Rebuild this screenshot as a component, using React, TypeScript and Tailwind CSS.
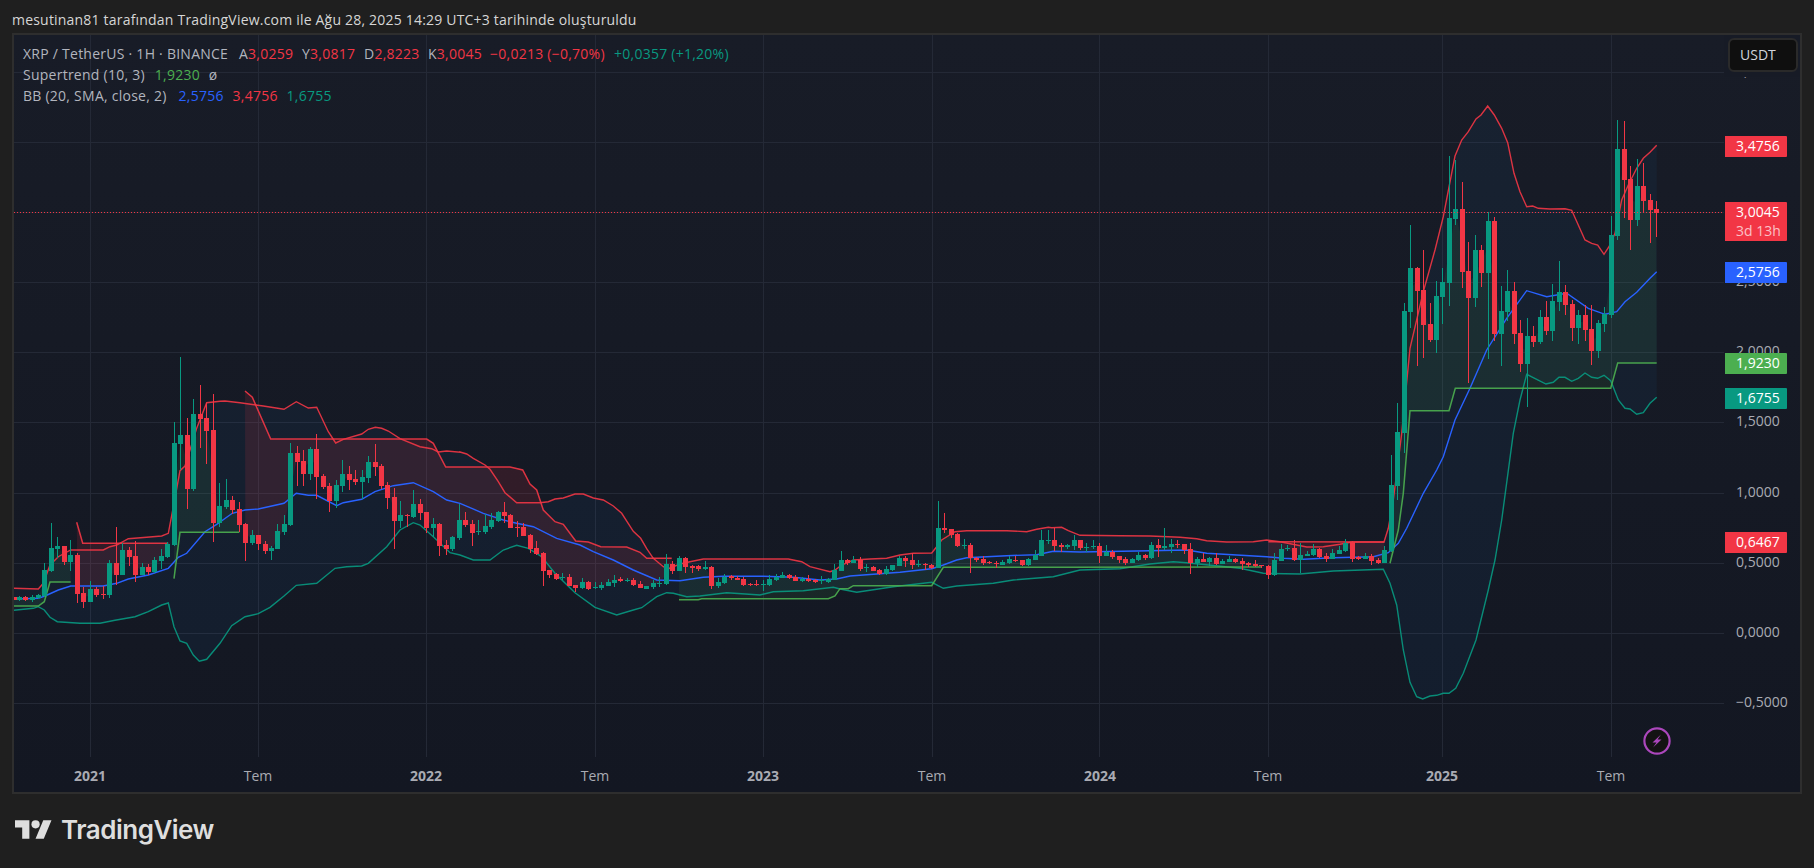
const UP = 1
const DN = 0
type Pt = number[]

// the series below were read off 3x crops, at() brings them back to page pixels
const at = (ox: number, oy: number, pts: Pt[]): Pt[] => pts.map(([x, y]) => [ox + x / 3, oy + y / 3])
const bars = (ox: number, oy: number, rows: number[][]) =>
  rows.map(([x, hi, top, bot, lo, dir]) => ({
    x: ox + x / 3,
    hi: oy + hi / 3,
    top: oy + top / 3,
    bot: oy + bot / 3,
    lo: oy + lo / 3,
    dir,
  }))

const candles = [
  ...bars(0, 340, [
    [42, 770, 771, 780, 781, DN], [58, 768, 771, 780, 782, UP], [76, 769, 771, 780, 783, DN], [97, 765, 772, 781, 785, UP],
    [115, 763, 766, 775, 776, UP], [133, 670, 690, 768, 772, UP], [154, 549, 625, 693, 697, UP], [172, 591, 618, 627, 655, UP],
    [193, 617, 618, 667, 675, DN], [211, 600, 645, 667, 692, UP], [232, 640, 645, 762, 790, DN], [250, 740, 758, 786, 803, DN],
    [271, 723, 747, 786, 786, UP], [289, 740, 746, 766, 770, DN], [310, 738, 763, 765, 777, DN], [328, 660, 669, 765, 775, UP],
    [349, 561, 669, 705, 735, DN], [367, 610, 630, 705, 705, UP], [388, 620, 630, 651, 678, DN], [406, 603, 648, 706, 725, DN],
    [427, 670, 680, 706, 706, UP], [445, 672, 682, 697, 705, DN], [463, 650, 660, 697, 700, UP], [484, 627, 648, 663, 687, UP],
    [502, 605, 612, 652, 655, UP], [523, 246, 309, 615, 618, UP], [541, 52, 285, 312, 390, UP], [562, 235, 285, 447, 507, DN],
    [580, 178, 222, 447, 453, UP], [601, 135, 222, 237, 323, DN], [619, 190, 234, 273, 372, DN], [640, 163, 270, 550, 606, DN],
    [658, 430, 498, 550, 560, UP], [679, 417, 481, 502, 507, UP], [697, 468, 481, 510, 522, DN], [718, 487, 508, 555, 575, DN],
    [736, 550, 552, 609, 663, DN], [757, 570, 585, 610, 615, UP], [775, 585, 585, 612, 630, DN], [796, 603, 612, 633, 642, DN],
    [814, 618, 624, 633, 660, UP], [832, 553, 573, 627, 627, UP], [853, 525, 552, 576, 585, UP], [871, 309, 339, 555, 558, UP],
    [892, 318, 339, 366, 438, DN], [910, 330, 363, 402, 438, DN], [931, 322, 327, 402, 420, UP], [949, 282, 327, 411, 477, DN],
    [970, 402, 408, 441, 447, DN], [988, 430, 438, 483, 516, DN], [1009, 420, 435, 483, 504, UP], [1027, 360, 402, 438, 456, UP],
    [1048, 378, 402, 420, 450, DN], [1066, 390, 417, 426, 435, DN], [1087, 390, 411, 426, 478, UP], [1105, 348, 366, 414, 429, UP],
    [1126, 312, 366, 381, 408, DN], [1144, 372, 378, 438, 447, DN], [1162, 427, 435, 474, 507, DN], [1183, 444, 471, 543, 627, DN],
    [1201, 483, 525, 543, 565, UP], [1222, 522, 525, 527, 560, DN], [1240, 450, 492, 531, 533, UP], [1261, 477, 492, 519, 540, DN],
    [1279, 516, 516, 564, 579, DN], [1300, 534, 552, 564, 590, UP], [1318, 550, 552, 618, 648, DN], [1339, 600, 615, 627, 645, DN],
    [1357, 588, 591, 627, 633, UP],
  ]),
  ...bars(220, 340, [
    [718, 492, 540, 595, 600, UP], [736, 516, 540, 555, 561, DN], [757, 540, 552, 579, 618, DN], [775, 540, 572, 576, 585, UP],
    [796, 522, 558, 576, 582, UP], [814, 520, 540, 561, 567, UP], [835, 513, 516, 543, 546, UP], [853, 486, 516, 528, 549, DN],
    [871, 522, 525, 564, 564, DN], [892, 543, 561, 564, 591, DN], [910, 549, 561, 588, 588, DN], [931, 582, 585, 627, 639, DN],
    [949, 603, 624, 642, 645, DN], [970, 636, 639, 693, 738, DN], [988, 690, 690, 705, 714, DN], [1009, 699, 702, 717, 720, DN],
    [1027, 699, 711, 714, 720, UP], [1048, 702, 711, 738, 738, DN], [1066, 735, 735, 744, 756, DN], [1087, 714, 726, 744, 747, UP],
    [1105, 723, 726, 747, 750, DN], [1126, 726, 741, 744, 747, UP], [1144, 726, 735, 744, 750, UP], [1165, 717, 726, 738, 738, UP],
    [1183, 705, 720, 729, 741, UP], [1201, 711, 717, 723, 726, DN], [1222, 714, 719, 722, 726, UP], [1240, 714, 720, 735, 738, DN],
    [1261, 723, 732, 744, 745, DN], [1279, 738, 738, 747, 747, UP], [1300, 720, 729, 741, 747, UP], [1318, 711, 728, 732, 741, UP],
    [1339, 642, 672, 732, 735, UP], [1357, 663, 672, 693, 702, DN],
  ]),
  ...bars(660, 490, [
    [58, 198, 204, 243, 243, UP], [76, 200, 204, 231, 248, DN], [97, 225, 228, 234, 248, DN], [115, 225, 229, 237, 243, DN],
    [136, 213, 231, 237, 240, UP], [154, 228, 232, 288, 297, DN], [175, 264, 276, 288, 294, UP], [193, 252, 261, 279, 282, UP],
    [214, 255, 259, 264, 270, DN], [232, 259, 264, 270, 270, DN], [250, 261, 267, 285, 288, DN], [271, 279, 282, 285, 288, DN],
    [289, 270, 282, 286, 288, DN], [310, 270, 283, 285, 303, UP], [328, 255, 267, 285, 288, UP], [349, 252, 261, 270, 273, UP],
    [367, 246, 255, 264, 264, UP], [388, 252, 255, 264, 267, DN], [406, 255, 261, 273, 273, DN], [427, 261, 267, 273, 276, UP],
    [445, 255, 267, 273, 276, DN], [466, 267, 270, 276, 279, DN], [484, 258, 270, 273, 282, UP], [505, 264, 267, 276, 279, UP],
    [523, 222, 240, 270, 270, UP], [544, 183, 210, 243, 243, UP], [562, 207, 210, 219, 225, DN], [580, 198, 210, 219, 219, UP],
    [601, 201, 210, 237, 243, DN], [619, 222, 230, 233, 246, UP], [640, 228, 231, 243, 243, DN], [658, 237, 240, 252, 255, DN],
    [679, 228, 237, 252, 255, UP], [697, 225, 225, 240, 243, UP], [718, 198, 204, 228, 228, UP], [736, 198, 204, 213, 231, DN],
    [757, 189, 210, 225, 237, DN], [775, 210, 222, 225, 231, UP], [796, 219, 222, 225, 240, DN], [814, 222, 225, 234, 237, DN],
    [835, 33, 114, 234, 234, UP], [853, 69, 114, 120, 129, DN], [874, 117, 117, 135, 144, DN], [892, 129, 132, 168, 171, DN],
    [913, 147, 165, 168, 177, UP], [931, 159, 165, 204, 249, DN], [949, 201, 204, 210, 216, DN], [970, 198, 207, 219, 225, DN],
    [988, 213, 216, 219, 222, DN], [1009, 213, 218, 220, 234, DN], [1027, 210, 216, 225, 225, UP], [1048, 198, 207, 219, 222, UP],
    [1066, 198, 209, 212, 216, DN], [1087, 210, 210, 225, 228, DN], [1105, 204, 207, 225, 228, UP], [1126, 180, 195, 210, 210, UP],
    [1144, 120, 150, 198, 198, UP], [1165, 120, 150, 153, 162, UP], [1183, 114, 150, 168, 183, DN],
  ]),
  ...bars(1040, 490, [
    [64, 160, 165, 171, 186, DN], [82, 162, 165, 171, 177, UP], [103, 135, 150, 168, 180, UP], [121, 150, 150, 174, 180, DN],
    [139, 158, 170, 174, 186, UP], [160, 150, 168, 171, 177, UP], [178, 159, 168, 198, 219, DN], [199, 165, 186, 198, 198, UP],
    [217, 180, 186, 201, 207, DN], [238, 198, 198, 210, 219, DN], [256, 201, 207, 219, 225, DN], [277, 204, 207, 219, 219, UP],
    [295, 186, 195, 210, 213, UP], [316, 192, 195, 204, 210, DN], [334, 156, 165, 204, 207, UP], [355, 147, 165, 174, 201, DN],
    [373, 114, 168, 174, 180, UP], [394, 147, 162, 171, 189, UP], [412, 150, 162, 165, 174, DN], [433, 162, 162, 180, 192, DN],
    [451, 159, 177, 219, 252, DN], [472, 201, 207, 219, 231, UP], [490, 189, 207, 216, 216, DN], [508, 201, 204, 216, 228, UP],
    [529, 189, 204, 222, 225, DN], [547, 207, 213, 222, 222, UP], [568, 198, 207, 216, 216, UP], [586, 204, 207, 216, 219, DN],
    [607, 204, 213, 222, 240, DN], [625, 216, 219, 225, 231, DN], [646, 210, 222, 228, 231, DN], [664, 225, 226, 229, 234, DN],
    [685, 225, 228, 255, 267, DN], [703, 189, 210, 255, 258, UP], [724, 162, 177, 213, 213, UP], [742, 165, 174, 177, 183, UP],
    [763, 150, 174, 210, 213, DN], [781, 159, 195, 210, 249, UP], [802, 183, 192, 198, 198, UP], [820, 162, 177, 195, 198, UP],
    [838, 174, 177, 201, 204, DN], [859, 189, 198, 207, 216, DN], [877, 177, 189, 207, 207, UP], [898, 168, 180, 192, 192, UP],
    [916, 147, 159, 183, 186, UP], [937, 153, 156, 207, 216, DN], [955, 198, 201, 207, 210, DN], [976, 189, 198, 207, 207, UP],
    [994, 192, 198, 213, 225, DN], [1015, 204, 210, 219, 222, DN], [1033, 168, 180, 219, 219, UP],
  ]),
  ...bars(0, 0, [
    [4174, 1365, 1455, 1653, 1656, UP], [4193, 1209, 1296, 1458, 1500, UP], [4213, 909, 933, 1299, 1359, UP], [4231, 675, 804, 936, 984, UP],
    [4252, 801, 804, 873, 1098, DN], [4270, 750, 870, 975, 1074, DN], [4291, 909, 972, 1020, 1026, DN], [4309, 843, 888, 1020, 1059, UP],
    [4327, 804, 846, 891, 972, UP], [4348, 468, 654, 849, 918, UP], [4366, 480, 627, 657, 675, UP], [4387, 546, 627, 816, 864, DN],
    [4405, 726, 813, 894, 1149, DN], [4426, 705, 750, 894, 921, UP], [4444, 735, 750, 819, 861, DN], [4465, 636, 663, 819, 1077, UP],
    [4483, 651, 663, 1002, 1023, DN], [4504, 858, 933, 1002, 1098, UP], [4522, 810, 873, 936, 963, UP], [4543, 846, 873, 1002, 1032, DN],
    [4561, 960, 999, 1092, 1116, DN], [4582, 954, 1008, 1092, 1221, UP], [4600, 978, 1008, 1026, 1041, DN], [4621, 930, 951, 1026, 1032, UP],
    [4639, 903, 951, 993, 1005, DN], [4657, 852, 903, 993, 1023, UP], [4678, 783, 876, 906, 933, UP], [4696, 855, 876, 915, 945, DN],
    [4717, 900, 912, 984, 1023, DN], [4735, 930, 945, 984, 1032, UP], [4756, 915, 945, 990, 1023, DN], [4774, 915, 987, 1053, 1095, DN],
    [4795, 960, 969, 1053, 1074, UP], [4813, 921, 942, 972, 996, UP], [4834, 648, 705, 945, 954, UP], [4852, 360, 447, 708, 720, UP],
    [4873, 363, 447, 540, 654, DN], [4891, 498, 537, 660, 750, DN], [4912, 477, 558, 660, 678, UP], [4930, 489, 558, 603, 636, DN],
    [4951, 582, 600, 630, 729, DN], [4969, 603, 627, 639, 711, DN],
  ]),
]

const upper = [
  ...at(0, 340, [[40, 745], [115, 747], [130, 730], [150, 675], [175, 650], [212, 630], [310, 630], [330, 620], [350, 615], [385, 596], [440, 592], [485, 588], [505, 580], [522, 490], [540, 392], [555, 378], [590, 265], [620, 188], [660, 184], [675, 183], [720, 188], [790, 198], [852, 208], [889, 185], [925, 204], [950, 202], [985, 275], [1007, 309], [1030, 298], [1085, 282], [1105, 268], [1126, 262], [1145, 265], [1165, 273], [1200, 296], [1260, 320], [1295, 326], [1315, 336], [1340, 333], [1380, 337]]),
  ...at(220, 340, [[720, 336], [740, 342], [760, 355], [795, 375], [810, 388], [835, 425], [855, 458], [890, 488], [960, 488], [985, 485], [1005, 477], [1030, 474], [1065, 462], [1090, 462], [1120, 474], [1150, 480], [1180, 498], [1205, 520], [1240, 574], [1262, 595], [1280, 626], [1300, 655], [1330, 680], [1345, 686]]),
  ...at(660, 490, [[60, 222], [90, 215], [130, 207], [385, 207], [425, 215], [450, 230], [510, 245], [525, 240], [545, 225], [580, 210], [630, 207], [680, 205], [720, 195], [760, 190], [815, 189], [830, 170], [845, 150], [885, 125], [920, 122], [1040, 122], [1100, 125], [1130, 118], [1165, 112]]),
  ...at(1040, 490, [[35, 113], [65, 112], [85, 122], [120, 136], [240, 137], [330, 138], [420, 142], [470, 146], [500, 152], [560, 156], [640, 155], [680, 150], [720, 155], [770, 165], [800, 171], [850, 170], [900, 163], [935, 156], [1032, 156], [1045, 115], [1060, 30]]),
  ...at(1380, 260, [[65, 520], [90, 265], [130, 95]]),
  ...at(1380, 20, [[165, 690], [190, 590], [225, 408], [245, 360], [265, 335], [288, 297], [303, 285], [323, 258], [343, 285], [365, 325], [383, 368], [402, 460], [420, 515], [440, 560], [458, 558], [475, 565], [510, 567], [555, 566], [575, 571], [615, 660], [635, 670], [653, 675], [672, 703], [687, 680], [705, 640], [725, 540], [745, 495], [770, 445], [790, 415], [810, 397], [830, 376]]),
]

const basis = [
  ...at(0, 340, [[40, 777], [115, 775], [135, 768], [175, 750], [212, 738], [310, 738], [350, 730], [385, 717], [445, 705], [505, 685], [535, 652], [560, 640], [615, 575], [650, 553], [697, 520], [735, 510], [775, 507], [852, 490], [889, 460], [925, 466], [950, 466], [1010, 497], [1030, 488], [1085, 478], [1125, 455], [1180, 437], [1240, 428], [1300, 455], [1340, 480], [1380, 490]]),
  ...at(220, 340, [[790, 520], [850, 540], [890, 550], [940, 560], [1010, 595], [1080, 615], [1120, 635], [1180, 660], [1240, 690], [1310, 720], [1380, 722]]),
  ...at(660, 490, [[130, 262], [190, 259], [310, 259], [400, 262], [480, 270], [530, 267], [570, 258], [720, 247], [815, 236], [850, 225], [890, 210], [920, 203], [1040, 197], [1130, 194]]),
  ...at(1040, 490, [[40, 184], [120, 186], [330, 182], [440, 180], [500, 190], [680, 200], [730, 205], [790, 208], [880, 203], [1000, 200], [1045, 188], [1075, 160], [1100, 115]]),
  ...at(1380, 260, [[130, 700], [170, 630], [190, 590], [225, 480], [270, 385], [320, 270], [380, 175], [440, 92], [500, 110], [560, 100], [625, 145], [675, 163], [710, 155], [735, 125], [770, 97], [810, 55], [830, 35]]),
]

const lower = [
  ...at(0, 340, [[40, 811], [100, 805], [115, 800], [133, 810], [150, 832], [172, 845], [240, 850], [300, 850], [345, 841], [405, 830], [445, 815], [485, 795], [505, 789], [522, 860], [540, 903], [560, 910], [580, 945], [598, 964], [620, 958], [660, 910], [695, 857], [735, 830], [775, 821], [810, 802], [852, 768], [889, 736], [950, 730], [1005, 685], [1040, 680], [1085, 678], [1105, 670], [1160, 620], [1200, 570], [1240, 548], [1260, 555], [1300, 590], [1350, 638], [1380, 645]]),
  ...at(220, 340, [[760, 660], [810, 660], [850, 630], [890, 616], [925, 625], [965, 650], [1005, 700], [1065, 758], [1125, 802], [1190, 825], [1240, 810], [1265, 803], [1310, 770], [1340, 758]]),
  ...at(660, 490, [[40, 310], [80, 320], [120, 318], [200, 308], [300, 315], [340, 305], [430, 302], [520, 292], [540, 297], [590, 307], [620, 302], [700, 290], [815, 277], [850, 295], [890, 288], [1000, 280], [1060, 270], [1180, 260]]),
  ...at(1040, 490, [[40, 260], [120, 240], [240, 236], [330, 222], [400, 215], [440, 218], [600, 235], [670, 250], [780, 252], [880, 243], [1030, 238]]),
  ...at(1380, 520, [[30, 190], [50, 255], [70, 390], [90, 487], [110, 530], [128, 537], [150, 528], [170, 526], [190, 520], [207, 520], [227, 505], [250, 460], [288, 360], [325, 210], [345, 120], [365, 0]]),
  ...at(1380, 260, [[400, 520], [420, 420], [440, 343], [470, 358], [498, 372], [520, 367], [537, 352], [555, 352], [575, 364], [595, 355], [615, 339], [635, 352], [653, 355], [672, 346], [692, 362], [715, 420], [735, 445], [750, 447], [770, 463], [790, 458], [810, 430], [830, 412]]),
]

const trend = [
  { dir: UP, from: 13, to: 72, line: at(0, 340, [[40, 798], [115, 798], [133, 785], [150, 726], [212, 726]]) },
  { dir: DN, from: 76, to: 169, line: at(0, 340, [[230, 547], [248, 610], [505, 610]]) },
  { dir: UP, from: 173, to: 240, line: at(0, 340, [[522, 716], [540, 577], [718, 577]]) },
  {
    dir: DN,
    from: 244,
    to: 673,
    line: [
      ...at(0, 340, [[735, 153], [757, 172], [812, 297], [1280, 297], [1300, 310], [1337, 381]]),
      ...at(220, 340, [[870, 381], [908, 390], [930, 432], [950, 450], [970, 510], [1005, 545], [1030, 553], [1067, 603], [1105, 606], [1142, 620], [1220, 621], [1260, 637], [1280, 655], [1355, 655]]),
    ],
  },
  {
    dir: UP,
    from: 678,
    to: 1262,
    line: [
      ...at(660, 490, [[57, 329], [115, 329], [125, 326], [505, 326], [525, 318], [540, 296], [565, 296], [580, 287], [815, 287], [850, 232], [1200, 232]]),
      ...at(1040, 490, [[665, 231]]),
    ],
  },
  { dir: DN, from: 1266, to: 1385, line: at(1040, 490, [[685, 155], [1033, 156]]) },
  {
    dir: UP,
    from: 1390,
    to: 1657,
    line: [
      ...at(1040, 490, [[1050, 220], [1075, 120]]),
      ...at(1380, 260, [[70, 700], [90, 452], [207, 452], [226, 385], [692, 385], [713, 309], [830, 309]]),
    ],
  },
]

const pts = (list: Pt[]) => list.map(([x, y]) => `${x.toFixed(1)},${y.toFixed(1)}`).join(" ")

const gridY = [72, 142, 212, 282, 352, 422, 493, 563, 633, 703]
const gridX = [90, 258, 426, 595, 763, 932, 1099, 1268, 1442, 1611]

const times = [
  { x: 90, label: "2021", bold: true },
  { x: 258, label: "Tem" },
  { x: 426, label: "2022", bold: true },
  { x: 595, label: "Tem" },
  { x: 763, label: "2023", bold: true },
  { x: 932, label: "Tem" },
  { x: 1100, label: "2024", bold: true },
  { x: 1268, label: "Tem" },
  { x: 1442, label: "2025", bold: true },
  { x: 1611, label: "Tem" },
]

const ticks = [
  { y: 70, label: "4,0000" },
  { y: 140, label: "3,5000" },
  { y: 280, label: "2,5000" },
  { y: 350, label: "2,0000" },
  { y: 420, label: "1,5000" },
  { y: 491, label: "1,0000" },
  { y: 561, label: "0,5000" },
  { y: 631, label: "0,0000" },
  { y: 701, label: "−0,5000" },
]

const badges = [
  { top: 136, text: "3,4756", color: "bg-[#f23645]" },
  { top: 262, text: "2,5756", color: "bg-[#2962ff]" },
  { top: 353, text: "1,9230", color: "bg-[#4caf50]" },
  { top: 388, text: "1,6755", color: "bg-[#089981]" },
  { top: 532, text: "0,6467", color: "bg-[#f23645]" },
]

const Chart = () => (
  <svg className="block w-[1710px] h-[722px]" viewBox="14 35 1710 722">
    {gridY.map((y) => (
      <line key={y} x1={14} x2={1724} y1={y + 0.5} y2={y + 0.5} stroke="#242936" strokeWidth={1} />
    ))}
    {gridX.map((x) => (
      <line key={x} x1={x + 0.5} x2={x + 0.5} y1={35} y2={757} stroke="#242936" strokeWidth={1} />
    ))}

    <polygon points={pts([...upper, ...[...lower].reverse()])} fill="#2196f3" fillOpacity={0.055} />
    {trend.map((t) => {
      const mids = candles.filter((c) => c.x >= t.from && c.x <= t.to).map((c) => [c.x, (c.top + c.bot) / 2])
      return (
        <polygon
          key={t.from}
          points={pts([...mids, ...[...t.line].reverse()])}
          fill={t.dir === UP ? "#4caf50" : "#f23645"}
          fillOpacity={t.dir === UP ? 0.1 : 0.13}
        />
      )
    })}

    <polyline points={pts(upper)} fill="none" stroke="#f23645" strokeOpacity={0.9} strokeWidth={1.4} />
    <polyline points={pts(lower)} fill="none" stroke="#089981" strokeOpacity={0.9} strokeWidth={1.4} />
    <polyline points={pts(basis)} fill="none" stroke="#2962ff" strokeWidth={1.4} />
    {trend.map((t) => (
      <polyline
        key={t.from}
        points={pts(t.line)}
        fill="none"
        stroke={t.dir === UP ? "#4caf50" : "#f23645"}
        strokeOpacity={0.9}
        strokeWidth={1.5}
      />
    ))}

    <g shapeRendering="crispEdges">
      {candles.map((c) => {
        const color = c.dir === UP ? "#089981" : "#f23645"
        const left = Math.round(c.x - 2.5)
        return (
          <g key={c.x} fill={color}>
            <rect x={left + 2} y={c.hi} width={1} height={Math.max(c.lo - c.hi, 1)} />
            <rect x={left} y={c.top} width={5} height={Math.max(c.bot - c.top, 1)} />
          </g>
        )
      })}
    </g>

    <line x1={14} x2={1724} y1={212.5} y2={212.5} stroke="#f23645" strokeWidth={1} strokeDasharray="1 2" shapeRendering="crispEdges" />
  </svg>
)

const Legend = () => (
  <div className="absolute left-[9px] top-[8px] flex flex-col text-[14px] leading-[21px] tracking-[0.25px] text-[#b2b5be] whitespace-nowrap">
    <div className="flex">
      <span className="w-[216px]">XRP / TetherUS · 1H · BINANCE</span>
      <span className="w-[63px]">A<span className="text-[#f23645]">3,0259</span></span>
      <span className="w-[62px]">Y<span className="text-[#f23645]">3,0817</span></span>
      <span className="w-[64px]">D<span className="text-[#f23645]">2,8223</span></span>
      <span className="w-[62px]">K<span className="text-[#f23645]">3,0045</span></span>
      <span className="w-[124px] text-[#f23645]">−0,0213 (−0,70%)</span>
      <span className="text-[#089981]">+0,0357 (+1,20%)</span>
    </div>
    <div className="flex gap-[10px]">
      <span>Supertrend (10, 3)</span>
      <span className="w-[44px] text-[#4caf50]">1,9230</span>
      <span>ø</span>
    </div>
    <div className="flex gap-[10px]">
      <span className="mr-[2px]">BB (20, SMA, close, 2)</span>
      <span className="w-[44px] text-[#2962ff]">2,5756</span>
      <span className="w-[44px] text-[#f23645]">3,4756</span>
      <span className="text-[#089981]">1,6755</span>
    </div>
  </div>
)

const PriceAxis = () => (
  <div className="relative w-[77px] h-[722px] text-[14px] font-medium text-[#a9abb3]">
    {ticks.map(({ y, label }) => (
      <span key={label} className="absolute left-[12px] -translate-y-1/2" style={{ top: y - 35 }}>
        {label}
      </span>
    ))}
    {badges.map(({ top, text, color }) => (
      <div
        key={text}
        className={`absolute left-[1px] w-[62px] h-[21px] pl-[11px] leading-[20px] text-white rounded-r-[1px] ${color}`}
        style={{ top: top - 35 }}
      >
        {text}
      </div>
    ))}
    <div className="absolute left-[1px] top-[167px] w-[62px] h-[39px] pl-[11px] bg-[#f23645] text-white rounded-r-[1px] leading-[19px]">
      <div>3,0045</div>
      <div className="text-white/70">3d 13h</div>
    </div>
    {/* the currency button hides the top tick, only its comma shows below */}
    <div className="absolute left-0 top-0 w-full h-[42px] pl-[4px] pt-[3px] bg-[#171b26]">
      <div className="w-[70px] h-[34px] pl-[10px] rounded-[6px] border-2 border-[#2a2a2a] bg-[#0f0f0f] text-[#d1d4dc] leading-[30px]">
        USDT
      </div>
    </div>
  </div>
)

const TimeAxis = () => (
  <div className="relative h-[35px] text-[14px] font-medium text-[#a9abb3]">
    {times.map(({ x, label, bold }) => (
      <span
        key={x}
        className={`absolute top-[8px] -translate-x-1/2 ${bold ? "font-bold" : ""}`}
        style={{ left: x - 14 }}
      >
        {label}
      </span>
    ))}
  </div>
)

const App = () => (
  <div className="w-[1814px] h-[868px] overflow-hidden bg-[#1f1f1f] font-['Open_Sans',sans-serif]">
    <div className="h-[33px] pl-3 pt-[10px] text-[14px] leading-[19px] tracking-[0.2px] text-[#d6d6d6] whitespace-nowrap">
      mesutinan81 tarafından TradingView.com ile Ağu 28, 2025 14:29 UTC+3 tarihinde oluşturuldu
    </div>
    <div className="relative ml-3 w-[1790px] border-2 border-[#2e2e2e] bg-gradient-to-b from-[#181c27] to-[#131722]">
      <div className="flex">
        <div className="relative w-[1710px] h-[722px]">
          <Chart />
          <Legend />
          <svg className="absolute left-[1629px] top-[692px] w-[28px] h-[28px]" viewBox="0 0 28 28">
            <circle cx="14" cy="14" r="12.6" fill="#131313" stroke="#ab47bc" strokeWidth="2.2" />
            <path d="M18 7.5 L9.5 15.5 H13.5 L10 20.5 L18.5 12.5 H14.5 Z" fill="#ab47bc" />
          </svg>
        </div>
        <PriceAxis />
      </div>
      <TimeAxis />
    </div>
    <div className="flex items-center gap-[9px] pl-[15px] pt-[21px] text-[#dedede]">
      <svg className="w-[37px] h-[29px]" viewBox="0 0 36 28" fill="currentColor">
        <path d="M14 22H7V11H0V4h14v18zM28 22h-8l7.5-18h8L28 22z" />
        <circle cx="20" cy="8" r="4" />
      </svg>
      <span className="font-['Inter',sans-serif] font-semibold text-[26px] leading-[30px] tracking-[-0.5px]">TradingView</span>
    </div>
  </div>
)

export default App
